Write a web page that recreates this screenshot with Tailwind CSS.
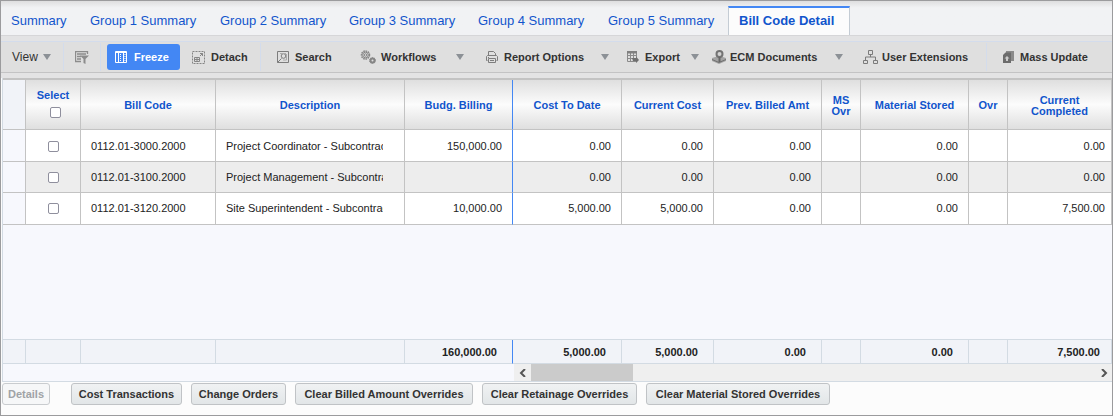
<!DOCTYPE html>
<html lang="en">
<head>
  <meta charset="UTF-8">
  <meta name="viewport" content="width=device-width, initial-scale=1.0">
  <title>Bill Code Detail</title>
  <script src="https://cdn.jsdelivr.net/npm/@tailwindcss/browser@4"></script>
</head>
<body class="bg-[#fcfcfc] font-['Liberation_Sans',Arial,sans-serif] text-[11px] text-[#333]">
  <div class="min-h-screen flex flex-col border border-[#9b9b9d]">
    <!-- Tabs -->
    <nav class="flex items-end h-[34px] pt-1 bg-linear-to-b from-[#dededf] via-[#f1f2f4] via-20% to-[#f1f2f4] text-[13px] text-[#1155cc] whitespace-nowrap">
      <a href="#" class="w-[79px] pl-[10px] leading-[29px]">Summary</a>
      <a href="#" class="w-[130px] pl-[10px] leading-[29px]">Group 1 Summary</a>
      <a href="#" class="w-[129px] pl-[10px] leading-[29px]">Group 2 Summary</a>
      <a href="#" class="w-[129px] pl-[10px] leading-[29px]">Group 3 Summary</a>
      <a href="#" class="w-[129px] pl-[10px] leading-[29px]">Group 4 Summary</a>
      <a href="#" class="w-[131px] pl-[11px] leading-[29px]">Group 5 Summary</a>
      <a href="#" aria-current="page" class="w-[122px] h-[29px] pl-[10px] border-t-2 border-x border-t-[#4387f4] border-x-[#c4ccd4] bg-[#fcfcfc] font-bold leading-[26px]">Bill Code Detail</a>
    </nav>

    <!-- Toolbar -->
    <div class="border-t border-[#d6d6d8] bg-[#e3e3e4] pt-[5px] pb-[5px]">
      <div class="flex items-center h-8 pl-[2px] border-t border-t-[#d3dcec] border-b border-b-[#c3c3c4] bg-[#dfdfdf] font-bold whitespace-nowrap">
        <button type="button" class="flex items-center w-[61px] h-7 pl-[9px] gap-[5px] border-r border-[#d3dcec] text-xs font-normal">
          View
          <svg class="shrink-0 w-2 h-[6px] fill-[#8c9196]" viewBox="0 0 8 6"><path d="M0 0h8L4 6z"/></svg>
        </button>
        <button type="button" aria-label="Query by example" class="flex items-center justify-center w-[37px] h-7 border-r border-[#d3dcec]">
          <svg class="w-[14px] h-[13px]" viewBox="0 0 14 13" fill="none" stroke="#8c8c8c"><path d="M12.500 3V.5H.5v10H6M2 3h9M2 5.500h4M2 8h4" stroke-width="1.300"/><path d="M5 4.500h9l-3.500 3.500v5l-2-1V8z" fill="#8c8c8c" stroke="none"/></svg>
        </button>
        <button type="button" aria-pressed="true" class="flex items-center w-[73px] h-[26px] ml-[6px] pl-2 gap-[7px] rounded-[3px] bg-[#4387f4] text-white">
          <svg class="shrink-0 w-3 h-3" viewBox="0 0 12 12" fill="none" stroke="#fff"><path d="M.5.500h11v11H.5zM.5 1.500h11M3.500 2v9.500M8.500 2v9.500"/><path d="M5.500 3v8M10 3v8" stroke-dasharray="1 1"/></svg>
          Freeze
        </button>
        <button type="button" class="flex items-center w-[81px] h-7 pl-3 gap-[6px] border-r border-[#d3dcec]">
          <svg class="shrink-0 w-[13px] h-[13px]" viewBox="0 0 13 13" fill="none" stroke="#858585"><path d="M.5.500h12v12H.5z" stroke-dasharray="2 1"/><path d="M2.500 6.500h5v4h-5zM2.500 8.500h5M5 6.500v4M8 5l2.500-2.500M8 2.500h2.500V5"/></svg>
          Detach
        </button>
        <button type="button" class="flex items-center w-[84px] h-7 pl-4 gap-[6px]">
          <svg class="shrink-0 w-3 h-3" viewBox="0 0 12 12" fill="none" stroke="#7d7d7d"><path d="M.5 11.500V.5h11v11zM.5 11.500l4-4"/><circle cx="6.500" cy="5" r="2.300"/><path d="M3 2.500h6M9.500 3v6H6" stroke="#aaa"/></svg>
          Search
        </button>
        <button type="button" class="flex items-center w-[123px] h-7 pl-[15px] gap-[5px]">
          <svg class="shrink-0 w-4 h-[14px]" viewBox="0 0 16 14" fill="none" stroke="#858585"><circle cx="5.500" cy="5" r="4" stroke-width="1.500" stroke-dasharray="1.600 .700"/><circle cx="5.500" cy="5" r="2.800"/><circle cx="5.500" cy="5" r="1.300"/><circle cx="12.500" cy="10.500" r="2" stroke-width="2"/><circle cx="12.500" cy="10.500" r="3" stroke-dasharray="1 .900"/></svg>
          <span class="flex-1 text-left">Workflows</span>
          <svg class="shrink-0 w-2 h-[6px] mr-1 fill-[#8c9196]" viewBox="0 0 8 6"><path d="M0 0h8L4 6z"/></svg>
        </button>
        <button type="button" class="flex items-center w-[145px] h-7 pl-[18px] gap-[6px]">
          <svg class="shrink-0 w-3 h-3" viewBox="0 0 12 12" fill="none" stroke="#7d7d7d"><path d="M2.500 5V.5h5l2 2V5M1.500 9.500h-1v-4l1-1h9l1 1v4h-1M2.500 7.500h7v4h-7zM4 9.500h4M2 6.500h1"/></svg>
          <span class="flex-1 text-left">Report Options</span>
          <svg class="shrink-0 w-2 h-[6px] mr-1 fill-[#8c9196]" viewBox="0 0 8 6"><path d="M0 0h8L4 6z"/></svg>
        </button>
        <button type="button" class="flex items-center w-[90px] h-7 pl-[14px] gap-[6px]">
          <svg class="shrink-0 w-3 h-3" viewBox="0 0 12 12" fill="none" stroke="#8a8a8a"><path d="M.5 1.500h9v9H.5zM.5 4.500h9M.5 7.500h6M3.500 1v9.500M6.500 1v6"/><path d="M0 0h10v2.500H0z" fill="#808080" stroke="none"/><path d="M5 7l4 0V5.500L12 9l-3 3V10H6z" fill="#6f6f6f" stroke="none"/></svg>
          <span class="flex-1 text-left">Export</span>
          <svg class="shrink-0 w-2 h-[6px] mr-1 fill-[#8c9196]" viewBox="0 0 8 6"><path d="M0 0h8L4 6z"/></svg>
        </button>
        <button type="button" class="flex items-center w-[144px] h-7 pl-[9px] gap-1">
          <svg class="shrink-0 w-[14px] h-[14px]" viewBox="0 0 14 14"><path d="M0 8l5-1.500h4l5 1.500v3l-7 3-7-3z" fill="#a3a3a3"/><path d="M0 9.500l7 3 7-3" fill="none" stroke="#6f6f6f"/><circle cx="7.500" cy="4" r="3" fill="#d2d2d2" stroke="#737373" stroke-width="2"/><path d="M6.500 7h2v5h-2z" fill="#666"/></svg>
          <span class="flex-1 text-left">ECM Documents</span>
          <svg class="shrink-0 w-2 h-[6px] mr-1 fill-[#8c9196]" viewBox="0 0 8 6"><path d="M0 0h8L4 6z"/></svg>
        </button>
        <button type="button" class="flex items-center w-[140px] h-7 pl-4 gap-1 border-r border-[#d3dcec]">
          <svg class="shrink-0 w-[15px] h-[14px]" viewBox="0 0 15 14" fill="none" stroke="#7b7b7b"><path d="M5.500.500h4v4h-4zM7.500 4.500v2.500M2.500 10V7h10v3"/><path d="M.5 10.500h4v3h-4zM10.500 10.500h4v3h-4z"/></svg>
          User Extensions
        </button>
        <button type="button" class="flex items-center h-7 pl-4 gap-[6px]">
          <svg class="shrink-0 w-[11px] h-3" viewBox="0 0 11 12"><path d="M3 0h8v10H3z" fill="#8a8a8a"/><path d="M0 4l2.500-2.500H8V12H0z" fill="#6c6c6c"/><path d="M4 5l2.500 2.500H5V10H3V7.500H1.500z" fill="#ccc"/></svg>
          Mass Update
        </button>
      </div>
    </div>

    <!-- Grid -->
    <div class="flex-none ml-px border-l border-[#d3dbe3]">
      <table class="w-full table-fixed border-separate border-spacing-0 border-t-2 border-[#c3c3c3] bg-[#f7f8fd] whitespace-nowrap">
        <colgroup>
          <col class="w-[23px]">
          <col class="w-[55px]">
          <col class="w-[135px]">
          <col class="w-[189px]">
          <col class="w-[108px]">
          <col class="w-[109px]">
          <col class="w-[92px]">
          <col class="w-[108px]">
          <col class="w-[39px]">
          <col class="w-[108px]">
          <col class="w-[39px]">
          <col>
        </colgroup>
        <thead class="text-[#1155cc] leading-[11px]">
          <tr class="h-[50px] *:pt-0.5 *:border-r *:border-b *:border-[#c3c3c3] *:bg-linear-to-b *:from-[#dfdfdf] *:via-[#fcfcfc] *:to-[#dfdfdf]">
            <td class="bg-none! bg-[#f1f3f8]"></td>
            <th class="pb-1">
              <label for="all" class="block">Select</label>
              <input id="all" type="checkbox" class="block size-[11px] mt-[6px] ml-[24px] appearance-none rounded-[2px] border border-[#8f8f9d] bg-white">
            </th>
            <th>Bill Code</th>
            <th>Description</th>
            <th class="border-r-[#4387f4]!">Budg. Billing</th>
            <th>Cost To Date</th>
            <th>Current Cost</th>
            <th>Prev. Billed Amt</th>
            <th>MS<br>Ovr</th>
            <th>Material Stored</th>
            <th>Ovr</th>
            <th>Current<br>Completed</th>
          </tr>
        </thead>
        <tbody class="text-right text-[#222]">
          <tr class="h-8 bg-white *:pt-0.5 *:border-r *:border-b *:border-[#c3c3c3] *:px-[10px]">
            <td class="bg-[#f7f8fd]"></td>
            <td><input type="checkbox" aria-label="Select 0112.01-3000.2000" class="block size-[11px] ml-[12px] appearance-none rounded-[2px] border border-[#8f8f9d] bg-white"></td>
            <td class="text-left">0112.01-3000.2000</td>
            <td class="text-left"><div class="w-[157px] overflow-hidden">Project Coordinator - Subcontractor</div></td>
            <td class="border-r-[#4387f4]!">150,000.00</td>
            <td>0.00</td>
            <td>0.00</td>
            <td>0.00</td>
            <td></td>
            <td>0.00</td>
            <td></td>
            <td class="pr-[6px]!">0.00</td>
          </tr>
          <tr class="h-[31px] bg-[#ededed] *:border-r *:border-b *:border-[#c3c3c3] *:px-[10px]">
            <td class="bg-[#f7f8fd]"></td>
            <td><input type="checkbox" aria-label="Select 0112.01-3100.2000" class="block size-[11px] ml-[12px] appearance-none rounded-[2px] border border-[#8f8f9d] bg-white"></td>
            <td class="text-left">0112.01-3100.2000</td>
            <td class="text-left"><div class="w-[157px] overflow-hidden">Project Management - Subcontractor</div></td>
            <td class="border-r-[#4387f4]!"></td>
            <td>0.00</td>
            <td>0.00</td>
            <td>0.00</td>
            <td></td>
            <td>0.00</td>
            <td></td>
            <td class="pr-[6px]!">0.00</td>
          </tr>
          <tr class="h-8 bg-white *:border-r *:border-b *:border-[#c3c3c3] *:px-[10px]">
            <td class="bg-[#f7f8fd]"></td>
            <td><input type="checkbox" aria-label="Select 0112.01-3120.2000" class="block size-[11px] ml-[12px] appearance-none rounded-[2px] border border-[#8f8f9d] bg-white"></td>
            <td class="text-left">0112.01-3120.2000</td>
            <td class="text-left"><div class="w-[157px] overflow-hidden">Site Superintendent - Subcontractor</div></td>
            <td class="border-r-[#4387f4]!">10,000.00</td>
            <td>5,000.00</td>
            <td>5,000.00</td>
            <td>0.00</td>
            <td></td>
            <td>0.00</td>
            <td></td>
            <td class="pr-[6px]!">7,500.00</td>
          </tr>
          <tr class="h-[115px]">
            <td colspan="12" class="border-b border-[#d3dbe3]"></td>
          </tr>
        </tbody>
        <tfoot class="text-right font-bold text-[#222]">
          <tr class="h-6 bg-[#f1f3f8] *:pt-0.5 *:border-r *:border-b *:border-[#d3dbe3] *:pr-[15px]">
            <td></td>
            <td></td>
            <td></td>
            <td></td>
            <td class="border-r-[#4387f4]!">160,000.00</td>
            <td>5,000.00</td>
            <td>5,000.00</td>
            <td>0.00</td>
            <td></td>
            <td>0.00</td>
            <td></td>
            <td class="pr-[11px]!">7,500.00</td>
          </tr>
        </tfoot>
      </table>

      <!-- Horizontal scrollbar -->
      <div class="flex h-[18px] border-b border-[#d3dbe3] bg-[#f7f8fd] pl-[511px]">
        <div class="flex flex-1 items-stretch bg-[#efefef]">
          <button type="button" aria-label="Scroll left" class="flex w-[17px] items-center justify-center">
            <svg class="w-2 h-2" viewBox="0 0 8 8" fill="none" stroke="#555" stroke-width="2"><path d="M6 0L2 4l4 4"/></svg>
          </button>
          <div class="w-[102px] bg-[#cbcbcb]"></div>
          <button type="button" aria-label="Scroll right" class="ml-auto flex w-[17px] items-center justify-center">
            <svg class="w-2 h-2" viewBox="0 0 8 8" fill="none" stroke="#555" stroke-width="2"><path d="M2 0l4 4-4 4"/></svg>
          </button>
        </div>
      </div>
    </div>

    <!-- Actions -->
    <div class="flex gap-[9px] pt-px pl-px font-bold whitespace-nowrap">
      <button type="button" disabled class="w-12 h-[22px] mr-3 rounded-[3px] border border-[#c9cccf] bg-[#f6f7f8] text-[#a0a3a6]">Details</button>
      <button type="button" class="w-[111px] h-[22px] rounded-[3px] border border-[#c0c3c6] bg-linear-to-b from-[#f0f2f3] to-[#e2e6e8]">Cost Transactions</button>
      <button type="button" class="w-[95px] h-[22px] rounded-[3px] border border-[#c0c3c6] bg-linear-to-b from-[#f0f2f3] to-[#e2e6e8]">Change Orders</button>
      <button type="button" class="w-[178px] h-[22px] rounded-[3px] border border-[#c0c3c6] bg-linear-to-b from-[#f0f2f3] to-[#e2e6e8]">Clear Billed Amount Overrides</button>
      <button type="button" class="w-[155px] h-[22px] rounded-[3px] border border-[#c0c3c6] bg-linear-to-b from-[#f0f2f3] to-[#e2e6e8]">Clear Retainage Overrides</button>
      <button type="button" class="w-[184px] h-[22px] rounded-[3px] border border-[#c0c3c6] bg-linear-to-b from-[#f0f2f3] to-[#e2e6e8]">Clear Material Stored Overrides</button>
    </div>
  </div>
</body>
</html>
